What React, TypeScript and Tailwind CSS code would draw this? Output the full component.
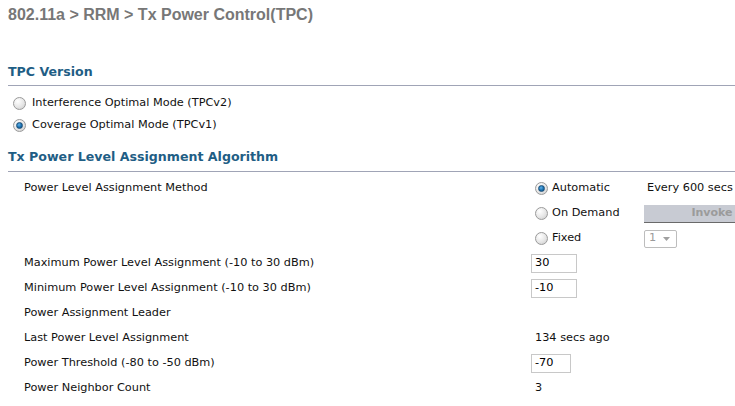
import React from "react";

function Radio({ checked }: { checked?: boolean }) {
  return (
    <span className="relative inline-flex w-[13px] h-[13px] shrink-0 rounded-full border border-[#9a9a9a] bg-[radial-gradient(circle_at_35%_30%,#ffffff_0%,#e6e6e6_55%,#c8c8c8_100%)] items-center justify-center">
      {checked && (
        <span className="w-[7px] h-[7px] rounded-full bg-[radial-gradient(circle_at_40%_35%,#5fb0e8_0%,#1a6fae_55%,#0d4a7a_100%)] border border-[#1c4f78]" />
      )}
    </span>
  );
}

function Input({ value, w }: { value: string; w: string }) {
  return (
    <div className={`h-[19px] ${w} shrink-0 border border-[#c8c8c8] bg-white flex items-center pl-[3px] text-[11.3px] text-black`}>
      {value}
    </div>
  );
}

export default function App() {
  const rowText = "text-[11.3px] text-[#111]";
  return (
    <div className="w-[735px] h-[406px] overflow-hidden bg-white" style={{ fontFamily: '"DejaVu Sans", Verdana, sans-serif' }}>
      <div className="h-[30px] flex items-center pl-2 text-[16px] font-bold text-[#777777]" style={{ fontFamily: '"Liberation Sans", Arial, sans-serif' }}>
        802.11a &gt; RRM &gt; Tx Power Control(TPC)
      </div>

      <div className="mt-[30px] ml-2 h-[26px] border-b border-[#a0a4b6] leading-[23px] text-[12.6px] font-bold text-[#1f5e85]">
        TPC Version
      </div>
      <div className="pt-[6px] pl-[13px]">
        <div className={`h-[22px] flex items-center gap-[6px] ${rowText}`}>
          <Radio />
          <span>Interference Optimal Mode (TPCv2)</span>
        </div>
        <div className={`h-[22px] flex items-center gap-[6px] ${rowText}`}>
          <Radio checked />
          <span>Coverage Optimal Mode (TPCv1)</span>
        </div>
      </div>

      <div className="mt-[9px] ml-2 h-[27px] border-b border-[#a0a4b6] leading-[24px] text-[12.6px] font-bold text-[#1f5e85]">
        Tx Power Level Assignment Algorithm
      </div>

      <div className={`pt-[4px] ${rowText}`}>
        <div className="h-[25px] flex items-center">
          <div className="w-[531px] shrink-0 pl-[24px]">Power Level Assignment Method</div>
          <div className="w-[113px] shrink-0 pl-[4px] flex items-center gap-[4px]">
            <Radio checked />
            <span>Automatic</span>
          </div>
          <div className="pl-[3px] whitespace-nowrap">Every 600 secs</div>
        </div>
        <div className="h-[25px] flex items-center">
          <div className="w-[531px] shrink-0" />
          <div className="w-[113px] shrink-0 pl-[4px] flex items-center gap-[4px]">
            <Radio />
            <span>On Demand</span>
          </div>
          <div className="w-[136px] shrink-0 h-[18px] bg-[#c8cbd3] border-b border-[#6a6a6a] flex items-center justify-center text-[11px] font-bold text-[#9b9b9b]">
            Invoke
          </div>
        </div>
        <div className="h-[25px] flex items-center">
          <div className="w-[531px] shrink-0" />
          <div className="w-[113px] shrink-0 pl-[4px] flex items-center gap-[4px]">
            <Radio />
            <span>Fixed</span>
          </div>
          <div className="w-[33px] shrink-0 h-[18px] border border-[#bdbdbd] rounded-[2px] flex items-center pl-[4px] text-[#9a9a9a] relative">
            <span>1</span>
            <svg className="absolute right-[6px] top-[6px]" width="7" height="4" viewBox="0 0 7 4">
              <path d="M0 0 L7 0 L3.5 4 Z" fill="#a0a0a0" />
            </svg>
          </div>
        </div>
        <div className="h-[25px] flex items-center">
          <div className="w-[531px] shrink-0 pl-[24px]">Maximum Power Level Assignment (-10 to 30 dBm)</div>
          <Input value="30" w="w-[46px]" />
        </div>
        <div className="h-[25px] flex items-center">
          <div className="w-[531px] shrink-0 pl-[24px]">Minimum Power Level Assignment (-10 to 30 dBm)</div>
          <Input value="-10" w="w-[46px]" />
        </div>
        <div className="h-[25px] flex items-center">
          <div className="w-[531px] shrink-0 pl-[24px]">Power Assignment Leader</div>
        </div>
        <div className="h-[25px] flex items-center">
          <div className="w-[531px] shrink-0 pl-[24px]">Last Power Level Assignment</div>
          <div className="pl-[4px]">134 secs ago</div>
        </div>
        <div className="h-[25px] flex items-center">
          <div className="w-[531px] shrink-0 pl-[24px]">Power Threshold (-80 to -50 dBm)</div>
          <Input value="-70" w="w-[40px]" />
        </div>
        <div className="h-[25px] flex items-center">
          <div className="w-[531px] shrink-0 pl-[24px]">Power Neighbor Count</div>
          <div className="pl-[4px]">3</div>
        </div>
      </div>
    </div>
  );
}
